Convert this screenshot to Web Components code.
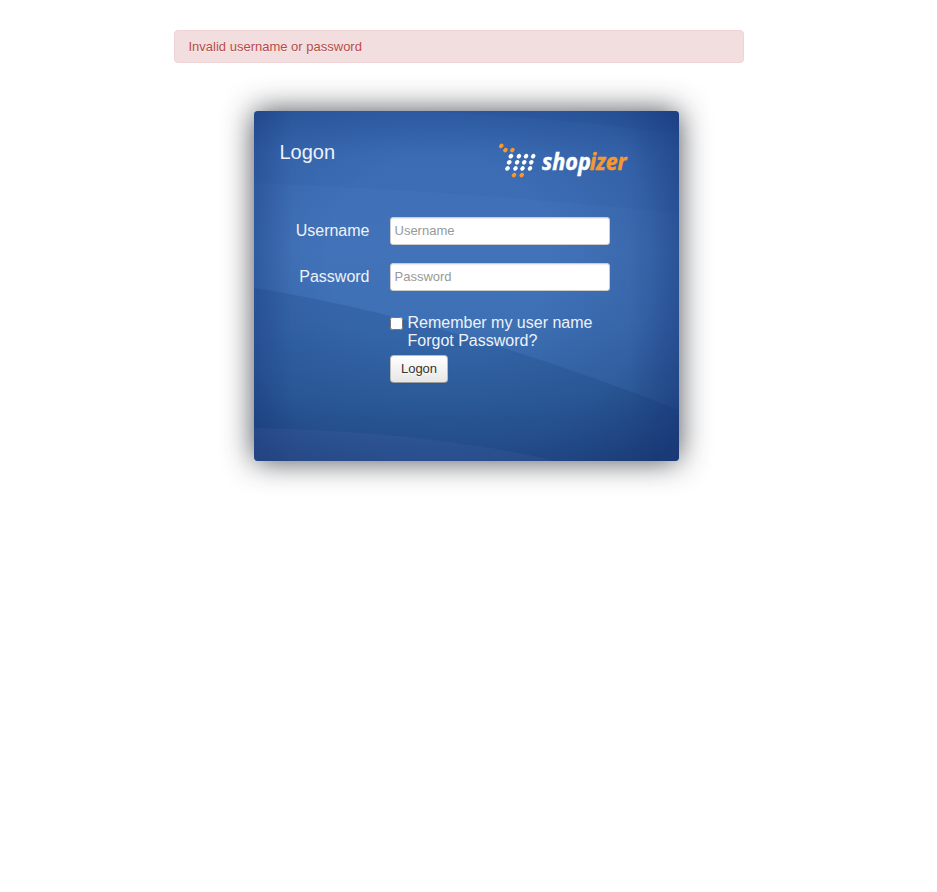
<!DOCTYPE html>
<html lang="en">
<head>
<meta charset="utf-8">
<title>Logon</title>
<style>
body { margin: 0; background: #fff; font-family: "Liberation Sans", Arial, sans-serif; }
</style>
</head>
<body>
<logon-page></logon-page>
<script>
function define(name, html, setup) {
  customElements.define(name, class extends HTMLElement {
    constructor() {
      super();
      const t = document.createElement('template');
      t.innerHTML = html;
      this.attachShadow({ mode: 'open' }).append(t.content.cloneNode(true));
    }
    connectedCallback() { if (setup) setup(this); }
  });
}

define('alert-box', `
<style>
:host { display: block; box-sizing: border-box; height: 33px; padding: 7px 14px 7px 13.5px; border: 1px solid #eed3d7; border-radius: 4px; background: #f2dede; color: #b94a48; font-size: 13px; line-height: 18px; text-shadow: 0 1px 0 rgba(255,255,255,.5); }
</style><slot></slot>`);

const dots = (color, pts) => pts.map(([x, y]) =>
  `<ellipse cx="${x}" cy="${y}" rx="2.5" ry="2.05" transform="rotate(-45 ${x} ${y})" fill="${color}"/>`).join('');

define('shop-logo', `
<style>
:host { display: block; width: 132px; height: 40px; }
svg { display: block; }
text { font: italic 700 24px "Open Sans", "Noto Sans", sans-serif; font-stretch: 100%; }
</style>
<svg width="132" height="40" viewBox="498 141 132 40">
${dots('#f7992e', [[501.3,145.9],[505.4,150.1],[512.4,150.1],[514,175.1],[521.7,175.1]])}
${dots('#fff', [[510.9,156.2],[518.9,156.2],[526,156.2],[533.2,156.2],[509.2,162.3],[517.1,162.3],[524.2,162.3],[531.3,162.3],[507.5,168.4],[515.5,168.4],[522.5,168.4],[530,168.4]])}
<text transform="translate(542 170.4) scale(.9 1)" stroke="#fff" stroke-width=".5" fill="#fff">shop</text>
<text transform="translate(589.8 170.4) scale(.885 1)" stroke="#f7992e" stroke-width=".5" fill="#f7992e">izer</text>
</svg>`);

define('blue-backdrop', `
<style>:host { display: block; } svg { display: block; width: 100%; height: 100%; }</style>
<svg viewBox="0 0 425 350" preserveAspectRatio="none">
<defs>
<linearGradient id="base" x1="0" y1="0" x2="0" y2="1">
<stop offset="0" stop-color="#3668b0"/><stop offset=".15" stop-color="#3b6cb4"/><stop offset=".4" stop-color="#3f70b6"/><stop offset=".6" stop-color="#3b6db1"/><stop offset=".8" stop-color="#3365a4"/><stop offset="1" stop-color="#295492"/>
</linearGradient>
<radialGradient id="vig" gradientUnits="userSpaceOnUse" cx="0" cy="0" r="1" gradientTransform="translate(185 145) scale(310 285)">
<stop offset=".35" stop-color="#122f6c" stop-opacity="0"/><stop offset=".7" stop-color="#122f6c" stop-opacity=".18"/><stop offset="1" stop-color="#122a62" stop-opacity=".55"/>
</radialGradient>
<linearGradient id="side"><stop offset="0" stop-color="#15347a" stop-opacity=".3"/><stop offset=".09" stop-color="#15347a" stop-opacity="0"/><stop offset=".88" stop-color="#15347a" stop-opacity="0"/><stop offset="1" stop-color="#15347a" stop-opacity=".3"/></linearGradient>
<linearGradient id="edge" x1="0" y1="0" x2="0" y2="1"><stop offset="0" stop-color="#15347a" stop-opacity=".22"/><stop offset=".12" stop-color="#15347a" stop-opacity="0"/></linearGradient>
</defs>
<rect width="425" height="350" fill="url(#base)"/>
<path d="M0 72Q210 80 425 102V299Q190 207 0 177Z" fill="#6399e0" opacity=".08"/>
<path d="M170 0Q310 7 425 23V0Z" fill="#173b82" opacity=".08"/>
<path d="M0 177Q190 207 425 299V350H0Z" fill="#0c3877" opacity=".13"/>
<rect width="425" height="350" fill="url(#vig)"/>
<rect width="425" height="350" fill="url(#side)"/>
<rect width="425" height="350" fill="url(#edge)"/>
<path d="M0 317Q180 321 301 350H0Z" fill="#5568ac" opacity=".16"/>
</svg>`);

define('form-row', `
<style>
:host { display: grid; grid-template-columns: 115.5px 220px; column-gap: 20.5px; height: 46px; align-items: start; }
label { text-align: right; font-size: 16px; line-height: 28px; color: #eef2f8; }
input { box-sizing: border-box; width: 220px; height: 28px; margin: 0; padding: 3px 4px 5px 3.5px; border: 1px solid #ccc; border-radius: 3px; background: #fff; box-shadow: inset 0 1px 1px rgba(0,0,0,.075); font: 13px "Liberation Sans", Arial, sans-serif; }
input::placeholder { color: #999; opacity: 1; }
</style><label for="field"></label><input id="field">`, el => {
  const label = el.shadowRoot.querySelector('label');
  const input = el.shadowRoot.querySelector('input');
  label.textContent = input.placeholder = el.getAttribute('label');
  input.type = el.getAttribute('type') || 'text';
});

define('logon-button', `
<style>
:host { display: block; }
button { display: block; box-sizing: border-box; width: 58px; height: 28px; padding: 0; border: 1px solid; border-color: rgba(0,0,0,.1) rgba(0,0,0,.1) rgba(0,0,0,.25); border-radius: 4px; background: linear-gradient(#fff,#e6e6e6) padding-box, #d0d0d0 border-box; box-shadow: inset 0 1px 0 rgba(255,255,255,.2), 0 1px 2px rgba(0,0,0,.05); color: #333; font: 13px/18px "Liberation Sans", Arial, sans-serif; text-shadow: 0 1px 1px rgba(255,255,255,.75); }
</style><button type="button"><slot></slot></button>`);

define('logon-card', `
<style>
:host { display: grid; width: 425px; height: 350px; border-radius: 4px; box-shadow: 0 0 30px rgba(39,42,50,.84); color: #eef2f8; }
blue-backdrop, .content { grid-area: 1 / 1; min-width: 0; min-height: 0; }
blue-backdrop { width: 425px; height: 350px; border-radius: 4px; overflow: hidden; }
.content { z-index: 1; display: flex; flex-direction: column; }
header { display: flex; justify-content: space-between; height: 76px; padding: 30px 49px 0 25.5px; }
h1 { margin: 0; font-size: 20px; font-weight: 400; line-height: 22px; }
.options { display: grid; grid-template-columns: 13px auto; column-gap: 4.5px; margin: 5px 0 0 136px; font-size: 16px; line-height: 18px; height: 41px; justify-content: start; white-space: nowrap; }
.options input { width: 13px; height: 13px; margin: 3px 0 0; }
.options span { display: block; }
logon-button { margin-left: 136px; }
</style>
<blue-backdrop></blue-backdrop>
<div class="content">
<header><h1>Logon</h1><shop-logo></shop-logo></header>
<form-row label="Username"></form-row>
<form-row label="Password" type="password"></form-row>
<div class="options"><input type="checkbox"><div><span>Remember my user name</span><span>Forgot Password?</span></div></div>
<logon-button>Logon</logon-button>
</div>`);

define('logon-page', `
<style>
:host { display: flex; flex-direction: column; box-sizing: border-box; min-height: 100vh; padding: 30px 0 0 174px; }
alert-box { width: 570px; }
logon-card { margin: 48px 0 0 80px; }
</style>
<alert-box>Invalid username or password</alert-box>
<logon-card></logon-card>`);
</script>
</body>
</html>
